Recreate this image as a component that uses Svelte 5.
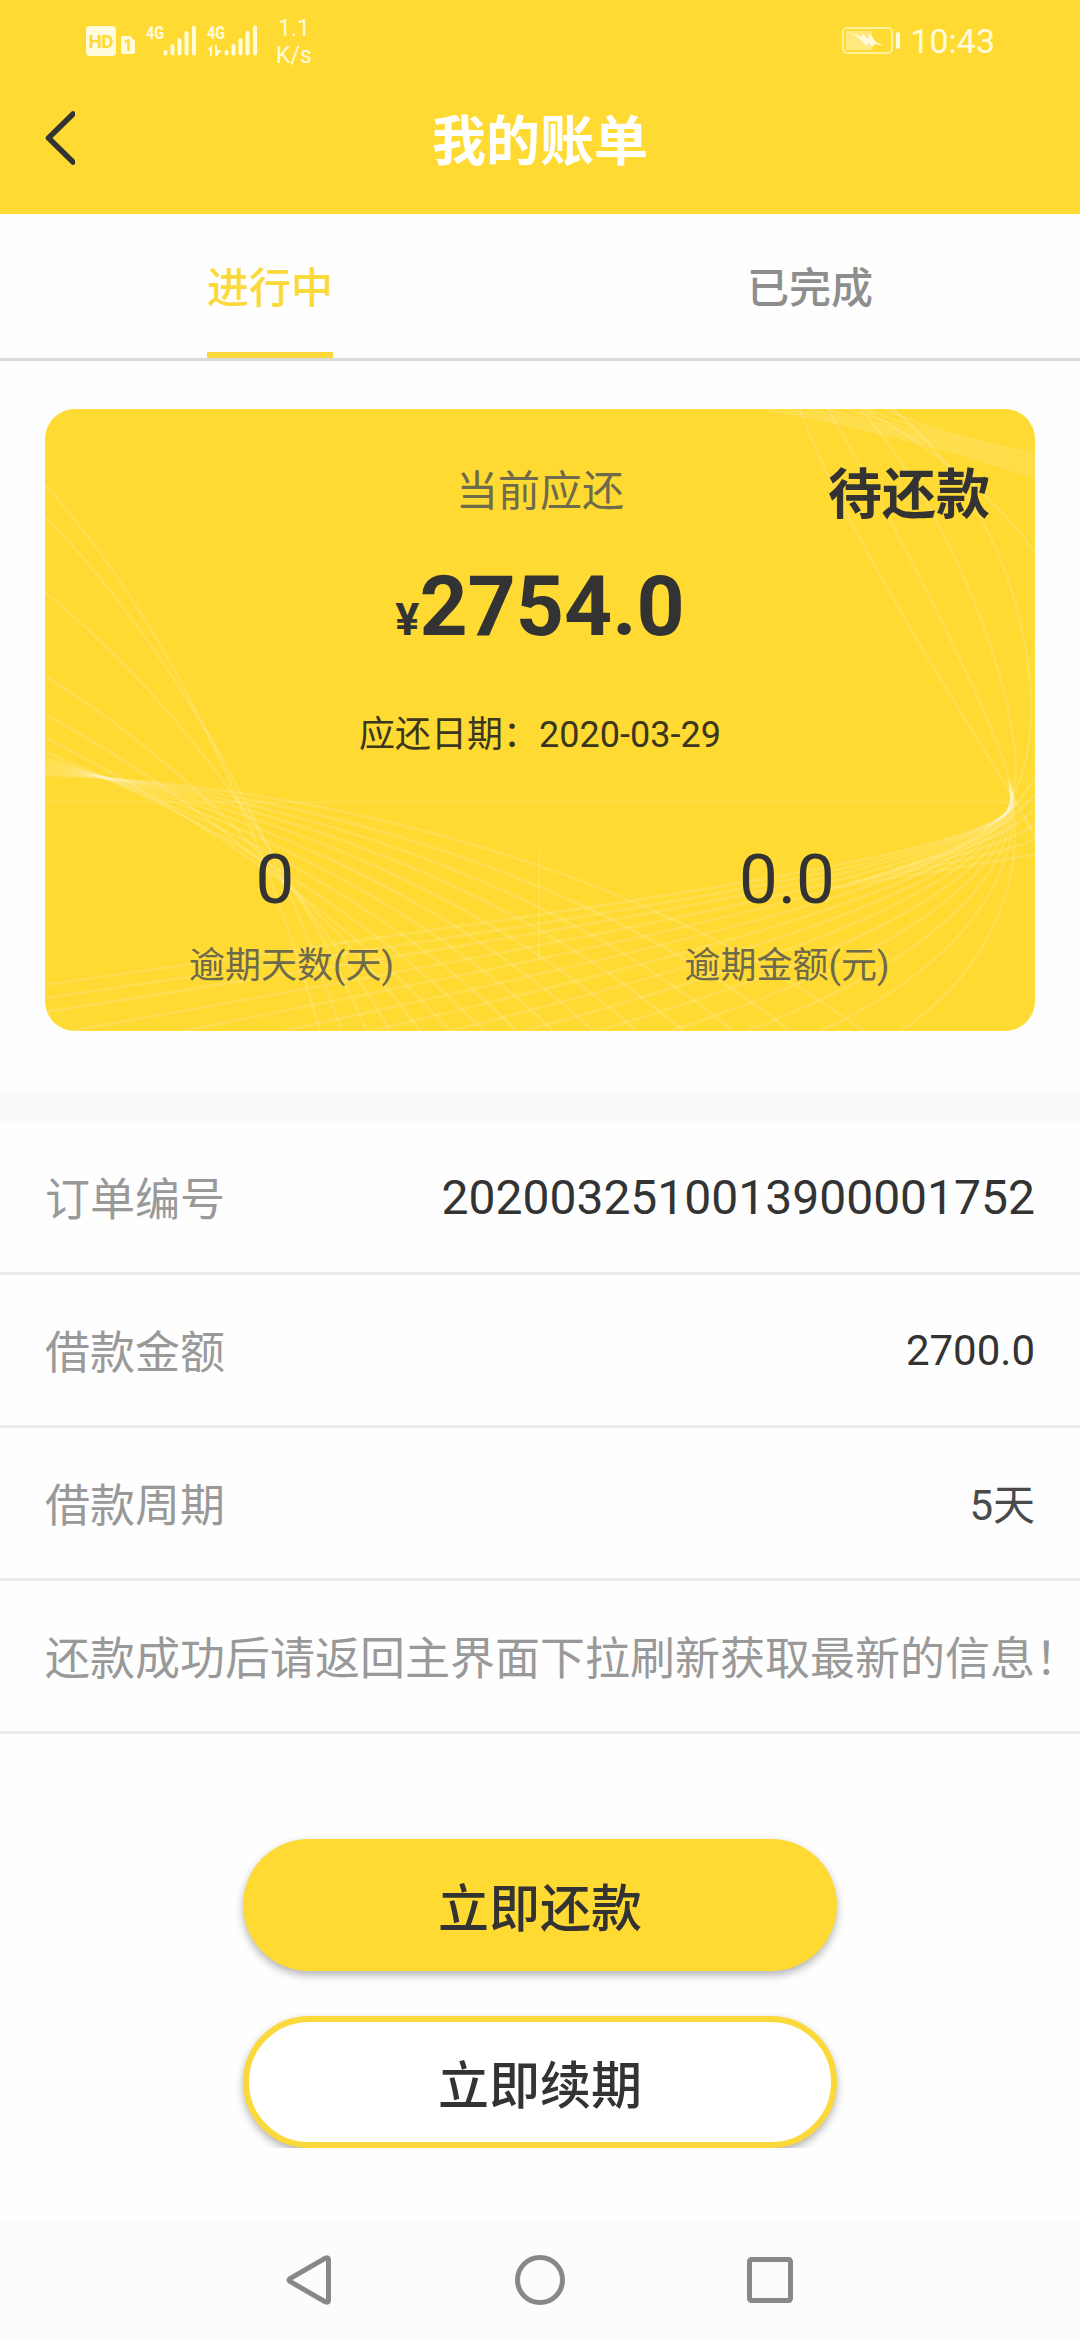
<script lang="ts">
  interface Row {
    label: string;
    value: string;
    kind?: string;
  }

  const tabs = ["进行中", "已完成"];
  let active = $state(0);

  const rows: Row[] = [
    { label: "订单编号", value: "2020032510013900001752", kind: "large" },
    { label: "借款金额", value: "2700.0" },
    { label: "借款周期", value: "5天", kind: "soft" },
    { label: "还款成功后请返回主界面下拉刷新获取最新的信息！", value: "" },
  ];

  const mix = (a: number, b: number, t: number) => Math.round(a + (b - a) * t);

  // strands that fall from the left edge of the card to its bottom
  const fallFrom = [225, 300, 480, 680, 770, 825, 860, 872, 880, 887, 893, 899, 905, 910, 915];
  const fallTo = [870, 935, 1010, 1080, 1170, 1260, 1360, 1460, 1570, 1690, 1820, 1960, 2110, 2280, 2500];
  const falling = fallFrom.map((y, i) => {
    const t = i / (fallFrom.length - 1);
    const lift = 50 + (t < 0.35 ? 340 * (0.35 - t) : 190 * (t - 0.35));
    const c1 = `${mix(45, fallTo[i], 0.36)} ${mix(y, 1525, 0.33) - lift}`;
    const c2 = `${mix(45, fallTo[i], 0.74)} ${mix(y, 1525, 0.67) - lift}`;
    return `M45 ${y}C${c1} ${c2} ${fallTo[i]} 1525`;
  });

  // strands that rise to the knot on the right and turn back to the top
  const riseFrom = [
    [45, 1415], [45, 1447], [45, 1480], [120, 1525], [460, 1525], [760, 1525], [1020, 1525],
    [1260, 1525], [1480, 1525], [1700, 1525], [1920, 1525], [2150, 1525], [2370, 1525], [2610, 1525],
  ];
  const rising = riseFrom.map(([x, y], i) => {
    const t = i / (riseFrom.length - 1);
    const c1 = `${mix(1500, 2850, t)} ${mix(1250, 1400, t)}`;
    const c2 = `${mix(2860, 3010, t)} ${mix(1120, 1180, t)}`;
    return `M${x} ${y}C${c1} ${c2} ${mix(2960, 2936, t)} ${mix(985, 930, t)}`;
  });
  const turning = [0, 0.3, 0.65, 1].map((t) => {
    const c1 = `${mix(2860, 3080, t)} ${mix(850, 780, t)}`;
    const c2 = `${mix(2450, 2980, t)} ${mix(350, 300, t)}`;
    return `M2948 965C${c1} ${c2} ${mix(2310, 2590, t)} 45`;
  });
  const corner = [0, 1, 2, 3, 4, 5, 6].map(
    (i) => `M${2210 + i * 60} 45Q${2560 + i * 25} ${90 + i * 2} 3015 ${205 - i * 9}`,
  );
  const edge = [0, 1, 2, 3, 4, 5].map(
    (i) => `M${2700 - i * 60} ${1115 + i * 14}Q2900 ${1060 + i * 12} 3015 ${925 + i * 36}`,
  );
  const strands = [
    ...falling,
    ...rising,
    ...turning,
    ...corner,
    ...edge,
    "M2948 965L3015 1062",
    "M2500 45Q2850 200 3015 385",
  ];
</script>

{#snippet signal()}
  <svg class="signal" width="34" height="32" viewBox="0 0 34 32">
    <path d="M2.500 28v1.500M9.500 22v7.500M16.500 16v13.500M23.500 9v20.500M31 3.500v26" />
  </svg>
{/snippet}

<div class="screen">
  <header>
    <div class="status">
      <svg class="hd" width="50" height="32" viewBox="0 0 50 32">
        <rect x="0" y="0" width="30" height="30" rx="4" />
        <text x="15" y="21.500" textLength="25">HD</text>
        <path d="M37 10h7l5 5v11a2 2 0 0 1-2 2H37a2 2 0 0 1-2-2V12a2 2 0 0 1 2-2z" />
        <text class="sim" x="42" y="25">1</text>
      </svg>
      <div class="network">
        <span class="gen">4G</span>
        {@render signal()}
      </div>
      <div class="network">
        <span class="gen">4G</span>
        <svg class="arrows" width="16" height="12" viewBox="0 0 16 12">
          <path d="M0 5 5 0v11H3V5zM8 0h2v5h5l-5 6H8z" />
        </svg>
        {@render signal()}
      </div>
      <div class="speed"><span>1.1</span><span>K/s</span></div>
      <svg class="battery" width="60" height="30" viewBox="0 0 60 30">
        <rect class="outline" x="1" y="2" width="49" height="25" rx="4" />
        <rect class="charge" x="4" y="5" width="26" height="19" />
        <path d="M9 7 20 11 21 8 26 13 28 8 34 16 42 20 33 18 30 21 27 17 24 20 18 13z" />
        <rect x="54" y="6" width="4" height="17" rx="2" />
      </svg>
      <span class="clock">10:43</span>
    </div>
    <div class="titlebar">
      <button class="back" type="button" aria-label="返回">
        <svg width="30" height="54" viewBox="0 0 30 54">
          <path d="M28 3 3.500 27 28 51" />
        </svg>
      </button>
      <h1>我的账单</h1>
    </div>
  </header>

  <nav class="tabs">
    {#each tabs as tab, i}
      <button type="button" class:active={active === i} onclick={() => (active = i)}>
        <span>{tab}</span>
      </button>
    {/each}
  </nav>

  <section class="card">
    <svg class="strands" viewBox="45 44 2970 1481" preserveAspectRatio="none">
      {#each strands as d}
        <path {d} />
      {/each}
    </svg>
    <div class="summary">
      <div class="caption">当前应还</div>
      <div class="badge">待还款</div>
      <div class="amount"><small>¥</small>2754.0</div>
      <div class="due">应还日期：2020-03-29</div>
    </div>
    <div class="overdue">
      <div class="cell days">
        <strong>0</strong>
        <span>逾期天数(天)</span>
      </div>
      <div class="divider"></div>
      <div class="cell money">
        <strong>0.0</strong>
        <span>逾期金额(元)</span>
      </div>
    </div>
  </section>

  <section class="details">
    {#each rows as row}
      <div class="row">
        <span class="label">{row.label}</span>
        {#if row.value}
          <span class="value {row.kind ?? ''}">{row.value}</span>
        {/if}
      </div>
    {/each}
  </section>

  <div class="actions">
    <button type="button" class="primary">立即还款</button>
    <button type="button" class="outlined">立即续期</button>
  </div>

  <footer>
    <svg width="50" height="54" viewBox="0 0 50 54">
      <path d="M5 25.500Q3 27 5 28.500L40.500 49Q43.500 50 43.500 47.500V6.500Q43.500 4 40.500 5z" />
    </svg>
    <svg width="54" height="54" viewBox="0 0 54 54">
      <circle cx="27" cy="27" r="22.500" />
    </svg>
    <svg width="50" height="54" viewBox="0 0 50 54">
      <rect x="4.500" y="6.500" width="41" height="41" rx="2" />
    </svg>
  </footer>
</div>

<style>
  :global(body) {
    margin: 0;
    background: #fff;
  }

  .screen {
    display: flex;
    flex-direction: column;
    width: 1080px;
    height: 2340px;
    overflow: hidden;
    background: #fefefe;
    color: #333;
    font-family: Roboto, "Noto Sans CJK SC", sans-serif;
  }

  button {
    padding: 0;
    border: none;
    background: none;
    color: inherit;
    font: inherit;
  }

  svg {
    display: block;
    flex: none;
  }

  header {
    height: 214px;
    background: #ffda33;
  }

  .status {
    display: flex;
    align-items: flex-start;
    box-sizing: border-box;
    height: 80px;
    padding: 0 85px 0 86px;
    color: #fffbdc;
    fill: #fffbdc;
  }

  .hd {
    margin-top: 26px;
  }

  .hd text {
    fill: #ffda33;
    font-size: 19px;
    font-weight: 700;
    text-anchor: middle;
  }

  .hd .sim {
    font-size: 16px;
  }

  .network {
    display: grid;
    grid-template-columns: 17px 34px;
    grid-template-rows: 19px 13px;
    margin: 24px 0 0 10px;
  }

  .gen {
    grid-area: 1 / 1;
    font-size: 19px;
    font-weight: 700;
    line-height: 17px;
    transform: scaleX(0.76);
    transform-origin: left;
  }

  .arrows {
    grid-area: 2 / 1;
    margin-top: 2px;
  }

  .signal {
    grid-area: 1 / 2 / 3 / 3;
    fill: none;
    stroke: #fffbdc;
    stroke-width: 4;
    stroke-linecap: round;
  }

  .speed {
    display: flex;
    flex-direction: column;
    margin: 15px 0 0 18px;
    font-size: 23px;
    line-height: 27px;
  }

  .speed span:first-child {
    padding-left: 2px;
  }

  .battery {
    margin: 26px 8px 0 auto;
  }

  .battery .outline {
    fill: none;
    stroke: #fff09a;
    stroke-width: 2;
  }

  .battery .charge {
    opacity: 0.45;
  }

  .clock {
    margin-top: 21px;
    font-size: 34px;
    line-height: 40px;
  }

  .titlebar {
    display: grid;
    grid-template-columns: 75px 1fr 75px;
    align-items: center;
    height: 116px;
  }

  .back svg {
    margin-left: 45px;
    fill: none;
    stroke: #333;
    stroke-width: 5.5;
    stroke-linecap: round;
    stroke-linejoin: round;
  }

  h1 {
    margin: 0;
    padding-top: 10px;
    color: #fff;
    font-size: 54px;
    font-weight: 700;
    line-height: 64px;
    text-align: center;
  }

  .tabs {
    display: flex;
    height: 144px;
    border-bottom: 3px solid #dcdcdc;
  }

  .tabs button {
    display: flex;
    flex: 1;
    justify-content: center;
    color: #8e8e8e;
    font-size: 42px;
    font-weight: 500;
  }

  .tabs span {
    box-sizing: border-box;
    height: 144px;
    border-bottom: 6px solid transparent;
    line-height: 150px;
  }

  .tabs .active {
    color: #fbd93b;
  }

  .tabs .active span {
    border-color: #fbd93b;
  }

  .card {
    position: relative;
    height: 622px;
    margin: 48px 45px 61px;
    overflow: hidden;
    border-radius: 30px;
    background: #ffda33;
  }

  .strands {
    position: absolute;
    inset: 0;
    width: 100%;
    height: 100%;
  }

  .strands path {
    fill: none;
    stroke: rgba(255, 255, 255, 0.15);
    stroke-width: 2.5;
    vector-effect: non-scaling-stroke;
  }

  .summary {
    position: relative;
    display: flex;
    flex-direction: column;
    align-items: center;
    box-sizing: border-box;
    height: 394px;
    padding-top: 58px;
    border-bottom: 2px solid rgba(255, 255, 255, 0.1);
  }

  .caption {
    color: #6f6a4c;
    font-size: 42px;
    line-height: 50px;
  }

  .badge {
    position: absolute;
    top: 55px;
    right: 45px;
    font-size: 54px;
    font-weight: 700;
    line-height: 64px;
  }

  .amount {
    margin-top: 41px;
    font-size: 84px;
    font-weight: 700;
    line-height: 98px;
  }

  .amount small {
    font-size: 45px;
  }

  .due {
    margin-top: 45px;
    color: #3a3620;
    font-size: 36px;
    line-height: 42px;
  }

  .overdue {
    position: relative;
    display: flex;
  }

  .cell {
    display: flex;
    flex-direction: column;
    align-items: center;
    padding-top: 37px;
  }

  .days {
    width: 493px;
  }

  .days strong {
    padding-right: 33px;
  }

  .money {
    width: 494px;
  }

  .divider {
    width: 2px;
    height: 110px;
    margin-top: 48px;
    background: rgba(255, 255, 255, 0.12);
  }

  .cell strong {
    font-size: 69px;
    font-weight: 400;
    line-height: 80px;
  }

  .cell span {
    margin-top: 25px;
    color: #6f6a4c;
    font-size: 36px;
    line-height: 42px;
  }

  .details {
    border-top: 30px solid #fafafa;
  }

  .row {
    display: flex;
    align-items: center;
    justify-content: space-between;
    height: 150px;
    padding: 0 45px;
    border-bottom: 3px solid #ebebeb;
    white-space: nowrap;
  }

  .label {
    padding-bottom: 2px;
    color: #999;
    font-size: 45px;
  }

  .value {
    font-size: 42px;
  }

  .value.large {
    font-size: 48px;
  }

  .value.soft {
    padding-bottom: 3px;
    color: #4a4a4a;
  }

  .actions {
    display: flex;
    flex-direction: column;
    align-items: center;
    gap: 45px;
    height: 309px;
    padding-top: 105px;
    overflow: hidden;
  }

  .actions button {
    flex: none;
    box-sizing: border-box;
    width: 594px;
    height: 132px;
    border-radius: 66px;
    box-shadow: 0 4px 8px rgba(0, 0, 0, 0.3);
    font-size: 51px;
    font-weight: 500;
  }

  .primary {
    background: #ffda33;
  }

  .outlined {
    border: 6px solid #fbd93b;
    background: #fff;
  }

  footer {
    display: flex;
    align-items: center;
    justify-content: center;
    gap: 178px;
    height: 120px;
    margin-top: auto;
    background: #fcfcfc;
  }

  footer svg {
    fill: none;
    stroke: #888;
    stroke-width: 5;
  }
</style>
